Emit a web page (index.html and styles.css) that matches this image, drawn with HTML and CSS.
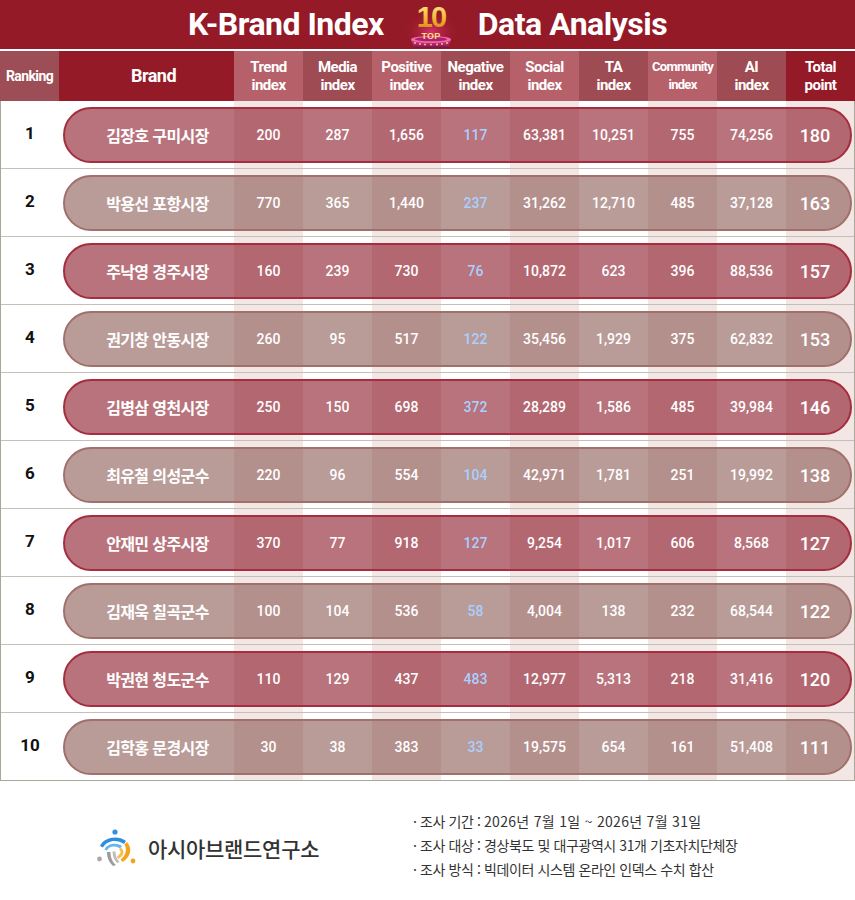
FILE: index.html
```html
<!DOCTYPE html>
<html lang="ko">
<head>
<meta charset="utf-8">
<title>K-Brand Index TOP10 Data Analysis</title>
<link rel="stylesheet" href="styles.css">
</head>
<body>
<div class="page">
  <div class="title">
    <span class="title-text">K-Brand Index</span>
    <svg class="top10" width="60" height="49" viewBox="0 0 60 49">
      <defs>
        <radialGradient id="glow" cx="50%" cy="60%" r="50%">
          <stop offset="0%" stop-color="#e0307a" stop-opacity="0.9"/>
          <stop offset="100%" stop-color="#951a27" stop-opacity="0"/>
        </radialGradient>
        <linearGradient id="gold" x1="0" y1="0" x2="0" y2="1">
          <stop offset="0%" stop-color="#fff0a0"/>
          <stop offset="55%" stop-color="#f2b72e"/>
          <stop offset="100%" stop-color="#c97a12"/>
        </linearGradient>
        <linearGradient id="ped" x1="0" y1="0" x2="0" y2="1">
          <stop offset="0%" stop-color="#e8429a"/>
          <stop offset="100%" stop-color="#7a1240"/>
        </linearGradient>
      </defs>
      <ellipse cx="30" cy="28" rx="28" ry="19" fill="url(#glow)"/>
      <path d="M10 39.5 L50 39.5 L47 48 L13 48 Z" fill="url(#ped)"/>
      <ellipse cx="30" cy="39.5" rx="20" ry="3.4" fill="#f06ab0"/>
      <ellipse cx="30" cy="39.2" rx="16" ry="2.1" fill="#b0206a"/>
      <g fill="#ffd36a">
        <circle cx="14" cy="43" r="0.9"/><circle cx="19" cy="44" r="0.9"/><circle cx="24" cy="44.5" r="0.9"/>
        <circle cx="30" cy="44.6" r="0.9"/><circle cx="36" cy="44.5" r="0.9"/><circle cx="41" cy="44" r="0.9"/><circle cx="46" cy="43" r="0.9"/>
      </g>
      <text x="30" y="27" text-anchor="middle" class="svg-ten" fill="url(#gold)">10</text>
      <text x="30" y="38.5" text-anchor="middle" class="svg-top">TOP</text>
    </svg>
    <span class="title-text">Data Analysis</span>
  </div>

  <div class="thead">
    <div class="th th-rank">Ranking</div>
    <div class="th th-brand">Brand</div>
    <div class="th th-light">Trend<br>index</div>
    <div class="th th-dark">Media<br>index</div>
    <div class="th th-light">Positive<br>index</div>
    <div class="th th-dark">Negative<br>index</div>
    <div class="th th-light">Social<br>index</div>
    <div class="th th-dark">TA<br>index</div>
    <div class="th th-light th-small">Community<br>index</div>
    <div class="th th-dark">AI<br>index</div>
    <div class="th th-total">Total<br>point</div>
  </div>

  <div class="tbody">
    <div class="row"><div class="rank">1</div><div class="pill red"><div class="name">김장호 구미시장</div><div class="c">200</div><div class="c">287</div><div class="c">1,656</div><div class="c neg">117</div><div class="c">63,381</div><div class="c">10,251</div><div class="c">755</div><div class="c">74,256</div><div class="c total">180</div></div></div>
    <div class="row"><div class="rank">2</div><div class="pill muted"><div class="name">박용선 포항시장</div><div class="c">770</div><div class="c">365</div><div class="c">1,440</div><div class="c neg">237</div><div class="c">31,262</div><div class="c">12,710</div><div class="c">485</div><div class="c">37,128</div><div class="c total">163</div></div></div>
    <div class="row"><div class="rank">3</div><div class="pill red"><div class="name">주낙영 경주시장</div><div class="c">160</div><div class="c">239</div><div class="c">730</div><div class="c neg">76</div><div class="c">10,872</div><div class="c">623</div><div class="c">396</div><div class="c">88,536</div><div class="c total">157</div></div></div>
    <div class="row"><div class="rank">4</div><div class="pill muted"><div class="name">권기창 안동시장</div><div class="c">260</div><div class="c">95</div><div class="c">517</div><div class="c neg">122</div><div class="c">35,456</div><div class="c">1,929</div><div class="c">375</div><div class="c">62,832</div><div class="c total">153</div></div></div>
    <div class="row"><div class="rank">5</div><div class="pill red"><div class="name">김병삼 영천시장</div><div class="c">250</div><div class="c">150</div><div class="c">698</div><div class="c neg">372</div><div class="c">28,289</div><div class="c">1,586</div><div class="c">485</div><div class="c">39,984</div><div class="c total">146</div></div></div>
    <div class="row"><div class="rank">6</div><div class="pill muted"><div class="name">최유철 의성군수</div><div class="c">220</div><div class="c">96</div><div class="c">554</div><div class="c neg">104</div><div class="c">42,971</div><div class="c">1,781</div><div class="c">251</div><div class="c">19,992</div><div class="c total">138</div></div></div>
    <div class="row"><div class="rank">7</div><div class="pill red"><div class="name">안재민 상주시장</div><div class="c">370</div><div class="c">77</div><div class="c">918</div><div class="c neg">127</div><div class="c">9,254</div><div class="c">1,017</div><div class="c">606</div><div class="c">8,568</div><div class="c total">127</div></div></div>
    <div class="row"><div class="rank">8</div><div class="pill muted"><div class="name">김재욱 칠곡군수</div><div class="c">100</div><div class="c">104</div><div class="c">536</div><div class="c neg">58</div><div class="c">4,004</div><div class="c">138</div><div class="c">232</div><div class="c">68,544</div><div class="c total">122</div></div></div>
    <div class="row"><div class="rank">9</div><div class="pill red"><div class="name">박권현 청도군수</div><div class="c">110</div><div class="c">129</div><div class="c">437</div><div class="c neg">483</div><div class="c">12,977</div><div class="c">5,313</div><div class="c">218</div><div class="c">31,416</div><div class="c total">120</div></div></div>
    <div class="row last"><div class="rank">10</div><div class="pill muted"><div class="name">김학홍 문경시장</div><div class="c">30</div><div class="c">38</div><div class="c">383</div><div class="c neg">33</div><div class="c">19,575</div><div class="c">654</div><div class="c">161</div><div class="c">51,408</div><div class="c total">111</div></div></div>
  </div>

  <div class="footer">
    <div class="logo">
      <svg class="logo-icon" width="40" height="40" viewBox="0 0 40 40">
        <circle cx="19" cy="4" r="2.6" fill="#2f8fe0"/>
        <path d="M4 18 C8 9 22 7 30 13 L28 16 C21 11 11 12 7 19.5 Z" fill="#2d8ee0"/>
        <path d="M8.5 21.5 C11 15.5 20 14 26 18 L24 20.5 C19 17.5 13 18 11 22.5 Z" fill="#66b5ef"/>
        <path d="M31 14 C36.5 20 35 29 26.5 34 L24.5 31.5 C30.5 27 31 21 28.5 16.5 Z" fill="#f4a31c"/>
        <path d="M25 19.5 C29 23 28 28 22 31 L21 28.5 C25 26 25.5 23 23 21.5 Z" fill="#f7bd52"/>
        <path d="M11 24 C11 30 13 34 17 38 L20 37 C16 33.5 14.5 29 14.5 24 Z" fill="#9c9c9c"/>
        <path d="M16.5 23.5 C16.5 28 18 32 21 35 L23.5 34 C20.5 31 19.5 27 19.5 23.5 Z" fill="#bdbdbd"/>
        <circle cx="3.5" cy="31" r="2.4" fill="#a8a8a8"/>
        <circle cx="37" cy="33" r="2.4" fill="#f4a31c"/>
      </svg>
      <span class="logo-text">아시아브랜드연구소</span>
    </div>
    <div class="notes">
      <div class="note">· 조사 기간 : <span class="date">2026년 7월 1일 ~ 2026년 7월 31일</span></div>
      <div class="note">· 조사 대상 : 경상북도 및 대구광역시 31개 기초자치단체장</div>
      <div class="note">· 조사 방식 : 빅데이터 시스템 온라인 인덱스 수치 합산</div>
    </div>
  </div>
</div>
</body>
</html>
```

FILE: styles.css
```css
* { box-sizing: border-box; }
html, body { margin: 0; padding: 0; background: #ffffff; }
body { font-family: Roboto, "Noto Sans CJK KR", "Liberation Sans", sans-serif; }
.page { width: 855px; }

.title {
  height: 49px;
  background: #951a27;
  display: flex;
  align-items: center;
  justify-content: center;
  gap: 17px;
  margin-bottom: 2px;
}
.title-text {
  color: #ffffff;
  font-family: Roboto, "Liberation Sans", sans-serif;
  font-weight: 700;
  font-size: 32px;
  letter-spacing: -0.5px;
  line-height: 49px;
}
.top10 { display: block; }
.svg-ten { font-family: "Liberation Sans", sans-serif; font-weight: 700; font-size: 29px; letter-spacing: -2px; }
.svg-top { font-family: "Liberation Sans", sans-serif; font-weight: 700; font-size: 9px; fill: #ffe07a; letter-spacing: 0.2px; }

.thead {
  display: grid;
  grid-template-columns: 59px 175px repeat(9, 69px);
  height: 50px;
}
.th {
  color: #ffffff;
  font-weight: 700;
  font-size: 15px;
  line-height: 18px;
  letter-spacing: -0.5px;
  display: flex;
  align-items: center;
  justify-content: center;
  text-align: center;
}
.th-rank { background: #9d4d55; font-size: 14px; letter-spacing: -0.6px; }
.th-brand { background: #951a27; font-size: 18px; padding-left: 14px; }
.th-light { background: #b6616a; }
.th-dark { background: #9f4b53; }
.th-total { background: #951a27; }
.th-small { font-size: 13px; letter-spacing: -0.7px; }

.tbody {
  border-left: 1px solid #aaa69a;
  border-right: 1px solid #aaa69a;
  border-bottom: 1px solid #aaa69a;
  background: linear-gradient(to right,
    #ffffff 0 233px, #f3e7e6 233px 302px,
    #ffffff 302px 371px, #f3e7e6 371px 440px,
    #ffffff 440px 509px, #f3e7e6 509px 578px,
    #ffffff 578px 647px, #f3e7e6 647px 716px,
    #ffffff 716px 785px, #f3e7e6 785px 853px);
}
.row {
  display: grid;
  grid-template-columns: 58px 1fr;
  height: 68px;
  border-bottom: 1px solid #c4c0b6;
}
.row.last { border-bottom: none; height: 67px; }
.rank {
  display: flex;
  align-items: center;
  justify-content: center;
  font-weight: 700;
  font-size: 17px;
  color: #111111;
  padding-bottom: 3px;
}
.pill {
  margin: 6px 2px 5px 4px;
  height: 56px;
  border-radius: 28px;
  border: 2px solid #a8303f;
  display: grid;
  grid-template-columns: 169px repeat(8, 69px) 1fr;
  align-items: center;
  color: #ffffff;
}
.pill.red { background: rgba(126, 0, 17, 0.55); border-color: #a52d3d; }
.pill.muted { background: rgba(128, 73, 68, 0.55); border-color: #a0706b; }
.name {
  font-family: "Noto Sans CJK KR", sans-serif;
  font-weight: 700;
  font-size: 16px;
  letter-spacing: -0.6px;
  text-align: center;
  padding-left: 16px;
}
.c {
  text-align: center;
  font-size: 14px;
  font-weight: 500;
}
.c.neg { color: #a9d0ff; }
.c.total { font-size: 18px; font-weight: 500; padding-right: 6px; }

.footer {
  display: grid;
  grid-template-columns: 413px 1fr;
  align-items: center;
  padding-top: 28px;
}
.logo {
  display: flex;
  align-items: center;
  gap: 12px;
  padding-left: 96px;
  padding-top: 6px;
}
.logo-icon { display: block; }
.logo-text {
  font-family: "Noto Sans CJK KR", sans-serif;
  font-weight: 500;
  font-size: 21px;
  color: #333333;
  letter-spacing: -0.3px;
}
.notes {
  font-family: "Noto Sans CJK KR", sans-serif;
  font-size: 14px;
  color: #333333;
  letter-spacing: -0.4px;
}
.note { line-height: 24px; }
.date { letter-spacing: 0.3px; }
```
